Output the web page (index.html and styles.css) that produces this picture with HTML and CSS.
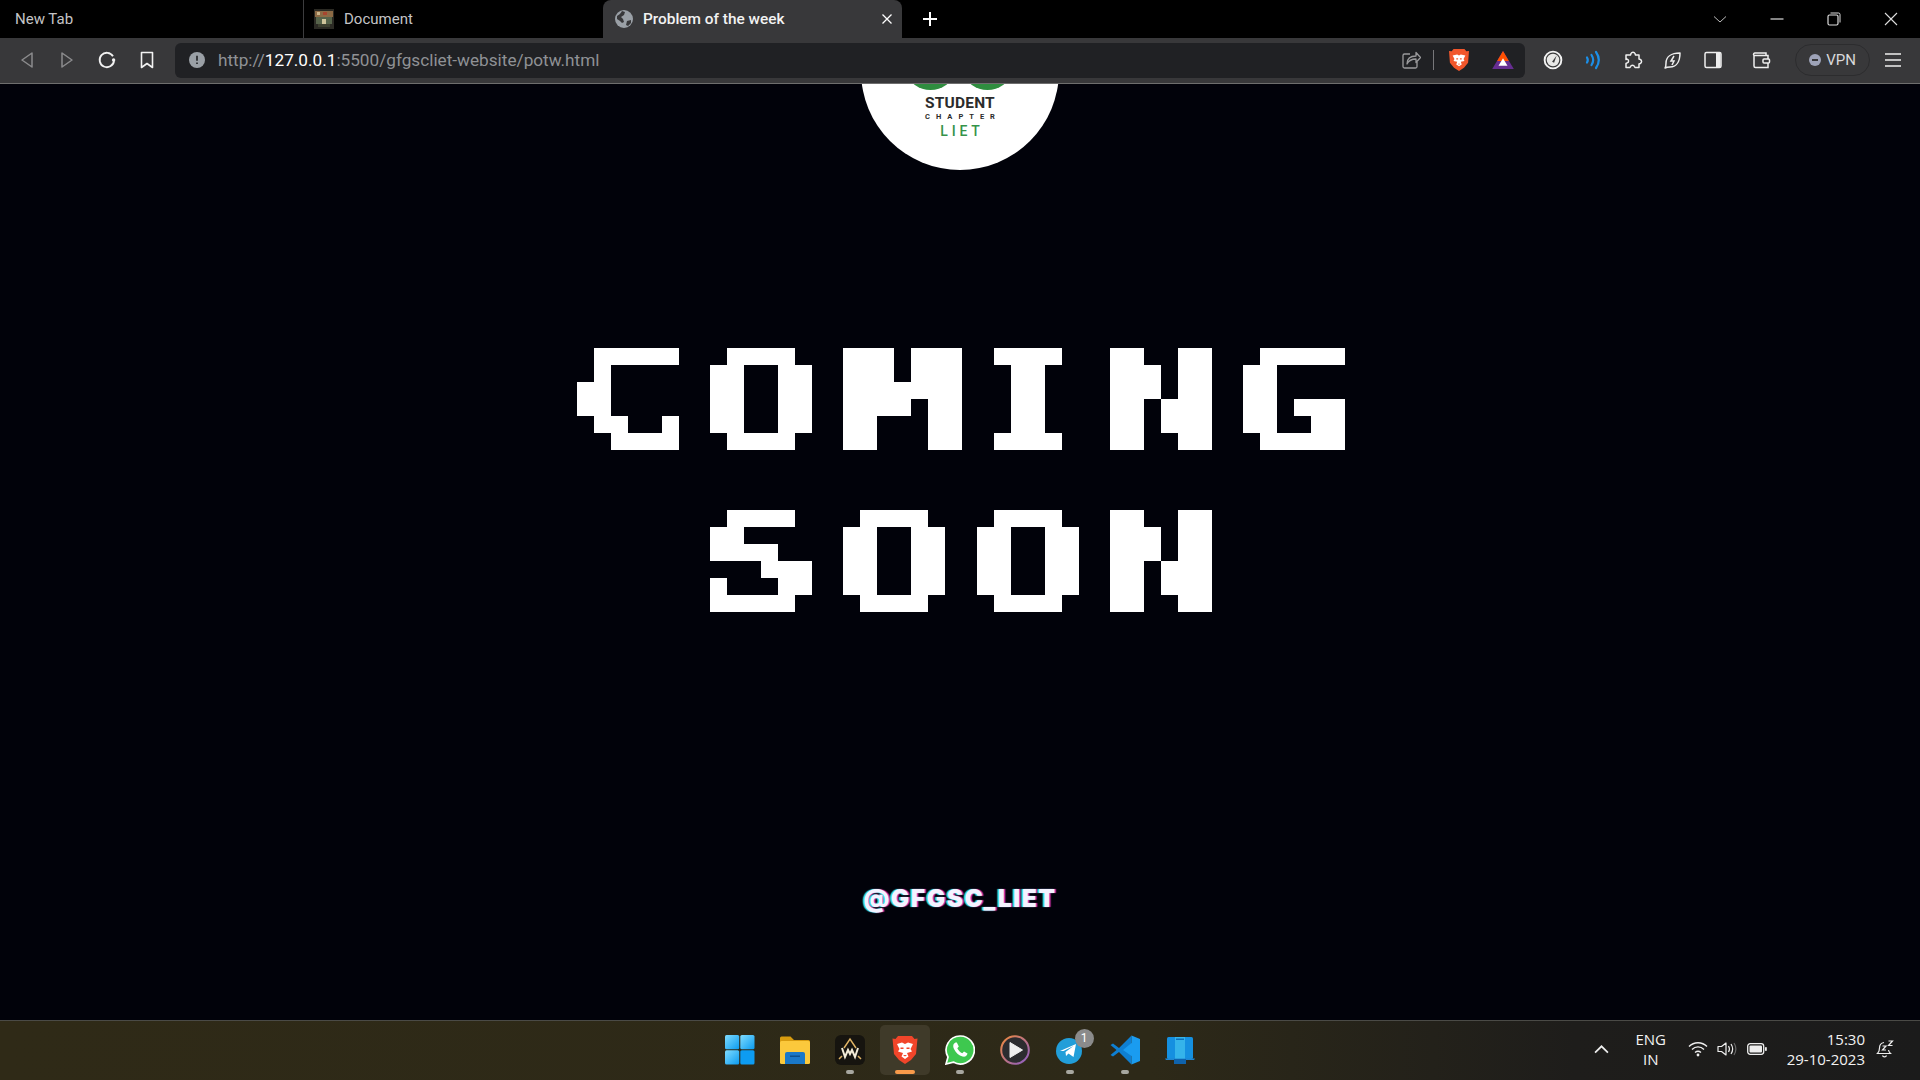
FILE: index.html
```html
<!DOCTYPE html>
<html lang="en">
<head>
<meta charset="utf-8">
<title>Problem of the week</title>
<link rel="stylesheet" href="styles.css">
</head>
<body>
<svg class="defs" width="0" height="0" aria-hidden="true">
  <defs>
    <filter id="pixelate" filterUnits="userSpaceOnUse" x="-40" y="-40" width="200" height="200" color-interpolation-filters="sRGB">
      <feFlood x="8" y="8" width="1" height="1" flood-color="#fff"/>
      <feComposite width="17" height="17"/>
      <feTile result="grid"/>
      <feComposite in="SourceGraphic" in2="grid" operator="in"/>
      <feComponentTransfer><feFuncA type="discrete" tableValues="0 1"/></feComponentTransfer>
      <feMorphology operator="dilate" radius="8"/>
    </filter>
    <linearGradient id="winG" x1="0" y1="0" x2="1" y2="1"><stop offset="0" stop-color="#7fdcff"/><stop offset="1" stop-color="#0b9bf0"/></linearGradient>
    <linearGradient id="ringG" x1="0" y1="0" x2="1" y2="1"><stop offset="0" stop-color="#f08a3c"/><stop offset="1" stop-color="#8a5cc8"/></linearGradient>
  </defs>
</svg>

<div class="tabstrip">
  <div class="tab tab-first"><span class="tab-title">New Tab</span></div>
  <div class="tab tab-doc">
    <svg class="favicon" viewBox="0 0 20 20"><rect width="20" height="20" fill="#2b2a24"/><rect x="1" y="2" width="18" height="6" fill="#8c6a45"/><rect x="3" y="3" width="3" height="3" fill="#c9b48a"/><rect x="9" y="3" width="4" height="3" fill="#a8452f"/><rect x="2" y="8" width="16" height="7" fill="#56634a"/><rect x="8" y="10" width="4" height="5" fill="#cfc49a"/><rect x="4" y="15" width="12" height="3" fill="#3d4030"/></svg>
    <span class="tab-title">Document</span>
  </div>
  <div class="tab tab-active">
    <svg class="favicon globe" viewBox="0 0 18 18"><circle cx="9" cy="9" r="9" fill="#9aa0a6"/><path d="M2 6c2-1 4-3 5-5l3 1-1 3-3 2 2 2 1 3-2 1-2-2-3-2zM12 11l4-1 0 3-3 3-2-1z" fill="#38383a"/></svg>
    <span class="tab-title active-title">Problem of the week</span>
    <svg class="tab-close" viewBox="0 0 10 10"><path d="M0.500 0.500l9 9M9.500 0.500l-9 9" stroke="#fff" stroke-width="1.300"/></svg>
  </div>
  <svg class="newtab" viewBox="0 0 16 16"><path d="M8 1v14M1 8h14" stroke="#fff" stroke-width="2"/></svg>
  <div class="spacer"></div>
  <div class="win-controls">
    <svg class="win-btn" viewBox="0 0 14 14"><path d="M1 4.500l6 5.500 6-5.500" fill="none" stroke="#bbb" stroke-width="1"/></svg>
    <svg class="win-btn" viewBox="0 0 14 14"><path d="M0.500 7h13" stroke="#ddd" stroke-width="1.200"/></svg>
    <svg class="win-btn" viewBox="0 0 14 14"><rect x="1" y="3" width="10" height="10" rx="1.500" fill="none" stroke="#ddd" stroke-width="1.200"/><path d="M3.500 1h8a1.500 1.500 0 0 1 1.500 1.500v8" fill="none" stroke="#ddd" stroke-width="1"/></svg>
    <svg class="win-btn" viewBox="0 0 14 14"><path d="M1 1l12 12M13 1L1 13" stroke="#ddd" stroke-width="1.100"/></svg>
  </div>
</div>

<div class="toolbar">
  <div class="tool"><svg class="ico" viewBox="0 0 20 20"><path d="M15 3L5 10l10 7z" fill="none" stroke="#8b8b8d" stroke-width="1.500" stroke-linejoin="round"/></svg></div>
  <div class="tool"><svg class="ico" viewBox="0 0 20 20"><path d="M5 3l10 7-10 7z" fill="none" stroke="#8b8b8d" stroke-width="1.500" stroke-linejoin="round"/></svg></div>
  <div class="tool"><svg class="ico" viewBox="0 0 20 20"><path d="M16 6.200A7.200 7.200 0 1 0 17 11" fill="none" stroke="#f2f2f2" stroke-width="1.800"/><circle cx="16.600" cy="10" r="1.700" fill="#f2f2f2"/></svg></div>
  <div class="tool"><svg class="ico" viewBox="0 0 20 20"><path d="M4.500 2.500h11v15L10 13.500l-5.500 4z" fill="none" stroke="#f2f2f2" stroke-width="1.600" stroke-linejoin="round"/></svg></div>
  <div class="address">
    <svg class="info" viewBox="0 0 16 16"><circle cx="8" cy="8" r="8" fill="#9aa0a6"/><path d="M8 3.800v5M8 10.500v1.600" stroke="#202124" stroke-width="1.600"/></svg>
    <div class="url">http://<b class="host">127.0.0.1</b>:5500/gfgscliet-website/potw.html</div>
    <svg class="share" viewBox="0 0 20 20"><path d="M9 4H3.500A1.500 1.500 0 0 0 2 5.500v11A1.500 1.500 0 0 0 3.500 18h11a1.500 1.500 0 0 0 1.500-1.500V12" fill="none" stroke="#9a9a9c" stroke-width="1.300"/><path d="M6 14c0-5 3-8 9-8V2.500l4.500 5-4.500 5V9c-4 0-7 1-9 5z" fill="none" stroke="#9a9a9c" stroke-width="1.300" stroke-linejoin="round"/></svg>
    <div class="addr-sep"></div>
    <svg class="brave" viewBox="0 0 22 26"><path d="M5 1h12l2 2.500 3-.5-1 13-4.500 5.500L11 25l-5.500-3.500L1 16 0 3l3 .5z" fill="#f1562b"/><path d="M4 8l5-1 2 1 2-1 5 1-2 4 1 2-4 1 1 3-3 2-3-2 1-3-4-1 1-2z" fill="#fff"/><path d="M8 11h2v1.500H8zM12 11h2v1.500h-2zM9.500 17h3l-1.500 1.200z" fill="#f1562b"/></svg>
    <svg class="bat" viewBox="0 0 24 20"><path d="M12 0l12 20H0z" fill="#662d91"/><path d="M12 0l6.500 11h-13z" fill="#ff5000"/><path d="M12 8l5 8.500H7z" fill="#fff"/></svg>
  </div>
  <div class="tool tool-after-addr"><svg class="ico" viewBox="0 0 22 22"><circle cx="11" cy="11" r="9.500" fill="#e8e8e6" stroke="#f5f5f5" stroke-width="1.500"/><circle cx="11" cy="11" r="7.500" fill="none" stroke="#3a3a3b" stroke-width="1.300"/><path d="M10 13l5-7-2.800 8z" fill="#3a3a3b"/></svg></div>
  <div class="tool"><svg class="ico" viewBox="0 0 20 20"><g fill="none" stroke="#1b8fe8" stroke-width="2.200" stroke-linecap="round"><path d="M4 7.500c1 1.600 1 3.400 0 5"/><path d="M8.500 5c2 3 2 7 0 10"/><path d="M13 2c3.500 5 3.500 11 0 16"/></g></svg></div>
  <div class="tool"><svg class="ico" viewBox="0 0 20 20"><path d="M8 3.500a2.200 2.200 0 0 1 4 0l.5 1.500H16v4l1.300.5a2.200 2.200 0 0 1 0 4L16 14v3.500h-4l-.5-1a2.200 2.200 0 0 0-4 0l-.5 1H3v-4l1.200-.6a2 2 0 0 0 0-3.800L3 9.500V5h4.500z" fill="none" stroke="#eee" stroke-width="1.500" stroke-linejoin="round"/></svg></div>
  <div class="tool"><svg class="ico" viewBox="0 0 20 20"><path d="M2 18c1-1 1-2 1-5 0-6 5-10 14-10 0 9-4 14-10 14-2 0-3 0-5 1z" fill="none" stroke="#eee" stroke-width="1.500" stroke-linejoin="round"/><path d="M11 6l-3 5h3l-2 4" fill="none" stroke="#eee" stroke-width="1.500"/></svg></div>
  <div class="tool"><svg class="ico" viewBox="0 0 20 20"><rect x="2" y="2.500" width="16" height="15" rx="1.500" fill="none" stroke="#eee" stroke-width="1.500"/><rect x="13" y="3" width="4.500" height="14" fill="#eee"/></svg></div>
  <div class="tool tool-wallet"><svg class="ico" viewBox="0 0 20 20"><path d="M3 5.500V16a1.500 1.500 0 0 0 1.500 1.500H17V13M17 9V5.500H3a1.500 1.500 0 0 1 1.500-2.500H15v2" fill="none" stroke="#eee" stroke-width="1.500"/><rect x="12" y="9" width="6.500" height="4" rx="1" fill="none" stroke="#eee" stroke-width="1.500"/></svg></div>
  <div class="vpn"><span class="vpn-dot"></span><span>VPN</span></div>
  <div class="tool"><svg class="ico" viewBox="0 0 20 20"><path d="M2 4h16M2 10h16M2 16h16" stroke="#eee" stroke-width="1.500"/></svg></div>
</div>

<main class="page">
  <div class="logo">
    <svg class="logo-leaves" viewBox="0 0 100 6"><ellipse cx="21.500" cy="-10" rx="21.500" ry="16" fill="#2f8d3f"/><ellipse cx="78.500" cy="-10" rx="21.500" ry="16" fill="#2f8d3f"/></svg>
    <div class="logo-student">STUDENT</div>
    <div class="logo-chapter">CHAPTER</div>
    <div class="logo-liet">LIET</div>
  </div>
  <div class="coming">
    <div class="pixel-line"><span class="px"><span class="glyph">C</span></span><span class="px"><span class="glyph">O</span></span><span class="px"><span class="glyph glyph-m">M</span></span><span class="px"><span class="glyph glyph-i">I</span></span><span class="px"><span class="glyph">N</span></span><span class="px"><span class="glyph">G</span></span></div>
    <div class="pixel-line"><span class="px"><span class="glyph">S</span></span><span class="px"><span class="glyph">O</span></span><span class="px"><span class="glyph">O</span></span><span class="px"><span class="glyph">N</span></span></div>
  </div>
  <div class="handle">@GFGSC_LIET</div>
</main>

<footer class="taskbar">
  <div></div>
  <div class="tb-icons">
    <div class="tb-item"><svg class="tb-ico" viewBox="0 0 30 30"><rect x="0" y="0" width="14.200" height="14.200" rx="1.500" fill="url(#winG)"/><rect x="15.300" y="0" width="14.200" height="14.200" rx="1.500" fill="url(#winG)"/><rect x="0" y="15.300" width="14.200" height="14.200" rx="1.500" fill="url(#winG)"/><rect x="15.300" y="15.300" width="14.200" height="14.200" rx="1.500" fill="#0d9cf2"/></svg></div>
    <div class="tb-item"><svg class="tb-ico" viewBox="0 0 30 30"><path d="M0 3a1.500 1.500 0 0 1 1.500-1.500h9L14 5h14.500A1.500 1.500 0 0 1 30 6.500V9H0z" fill="#d89c0f"/><rect x="0" y="6" width="30" height="23" rx="1.500" fill="#fbc93c"/><path d="M5 19a2 2 0 0 1 2-2h16a2 2 0 0 1 2 2v10H5z" fill="#1a78c8"/><rect x="10" y="20.500" width="10" height="1.500" fill="#0d4f8c"/></svg></div>
    <div class="tb-item has-dot"><svg class="tb-ico" viewBox="0 0 30 30"><rect width="30" height="30" rx="6" fill="#16140f"/><path d="M7 13l3 9 3-7 2 4 2-4 3 7 3-9" fill="none" stroke="#f3ecd8" stroke-width="2"/><path d="M9 13l6-9 6 9M4 24l3-3M26 24l-3-3" fill="none" stroke="#e0b465" stroke-width="1.500"/></svg></div>
    <div class="tb-item tb-active"><svg class="tb-ico" viewBox="0 0 26 30"><path d="M6 1h14l2.500 3 3-.5L24 19l-5 6-6 4-6-4-5-6L.5 3.500l3 .5z" fill="#f1452a"/><path d="M5 9l5-1.500 3 1.500 3-1.500L21 9l-2.500 5 1.500 2.500-5 1.500 1.500 3.500L13 24l-3.500-2.500L11 18l-5-1.500L7.500 14z" fill="#fff"/><path d="M8.500 12.500h3V14h-3zM14.500 12.500h3V14h-3zM11 20h4l-2 1.500z" fill="#f1452a"/></svg></div>
    <div class="tb-item has-dot"><svg class="tb-ico" viewBox="0 0 30 30"><path d="M15 1a14 14 0 0 0-12 21L1 29l7.300-1.900A14 14 0 1 0 15 1z" fill="#3ec84f" stroke="#fff" stroke-width="1.700"/><path d="M10.500 7.500c-2 1-3 3-1.500 6.500 2 4 5 6.500 8.500 7.500 3 .7 4.500-1 5-3l-3.500-2-1.700 1.800c-2-.8-4-2.800-5-5l1.500-1.800-2-4z" fill="#fff"/></svg></div>
    <div class="tb-item"><svg class="tb-ico" viewBox="0 0 30 30"><circle cx="15" cy="15" r="13.800" fill="#2c2c30" stroke="url(#ringG)" stroke-width="2"/><path d="M10 7.500L22.500 15 10 22.500z" fill="#efefef" stroke="#efefef" stroke-linejoin="round"/></svg></div>
    <div class="tb-item has-dot"><svg class="tb-ico" viewBox="0 0 30 30"><circle cx="14" cy="16" r="13" fill="#229ed9"/><path d="M5 16l16-7-2.500 13-5-3.500-2.500 2.500-.5-4 8-6-10 5z" fill="#fff"/></svg><span class="badge">1</span></div>
    <div class="tb-item has-dot"><svg class="tb-ico" viewBox="0 0 30 30"><path d="M21.500 .5L9 13 3 8.500 .5 10 6.500 15 .5 20 3 21.500 9 17l12.500 12.500z" fill="#0e7fd2"/><path d="M21.500 .5L30 4v22l-8.500 3.500L21.500 21 13 15l8.500-7z" fill="#1a9cf0"/></svg></div>
    <div class="tb-item"><svg class="tb-ico" viewBox="0 0 30 30"><rect x="2" y="2" width="26" height="22" rx="1.500" fill="#1590e0"/><path d="M10 2h10v22H10z" fill="#35b4ea"/><rect x="11" y="3.500" width="8" height="1.500" fill="#0d6fb8"/><path d="M0 23.500h30l-1 1.500H1z" fill="#1f86d0"/><rect x="9" y="24" width="12" height="5" fill="#0f63ad"/></svg></div>
  </div>
  <div class="tray">
    <svg class="tray-chev" viewBox="0 0 14 8"><path d="M1 7l6-6 6 6" fill="none" stroke="#eee" stroke-width="1.600"/></svg>
    <div class="lang"><div>ENG</div><div>IN</div></div>
    <svg class="tray-wifi" viewBox="0 0 20 16"><g fill="none" stroke="#eee" stroke-width="1.400"><path d="M1 5.500c5-5 13-5 18 0"/><path d="M4 8.500c3.500-3.500 8.500-3.500 12 0"/><path d="M7 11.500c2-1.600 4-1.600 6 0"/></g><circle cx="10" cy="14" r="1.400" fill="#eee"/></svg>
    <svg class="tray-vol" viewBox="0 0 20 16"><path d="M1 5.500h3.500L9 2v12l-4.500-3.500H1z" fill="none" stroke="#eee" stroke-width="1.200" stroke-linejoin="round"/><path d="M11.500 5c1.300 2 1.300 4 0 6M14 3c2 3 2 7 0 10" fill="none" stroke="#eee" stroke-width="1.200"/><path d="M17 2c2.500 4 2.500 8 0 12" fill="none" stroke="#666" stroke-width="1.200"/></svg>
    <svg class="tray-bat" viewBox="0 0 20 12"><rect x=".7" y=".7" width="16" height="10.600" rx="2.500" fill="none" stroke="#eee" stroke-width="1.300"/><rect x="2.500" y="2.500" width="12.500" height="7" rx="1" fill="#eee"/><rect x="18" y="4" width="1.800" height="4" rx=".8" fill="#eee"/></svg>
    <div class="clock"><div>15:30</div><div>29-10-2023</div></div>
    <svg class="tray-note" viewBox="0 0 20 20"><path d="M9 3.500C6 4 4.500 6 4.500 9c0 2.500-.5 4-2 5.500h13c-1-1-1.700-2-2-3.500" fill="none" stroke="#eee" stroke-width="1.200"/><path d="M7.500 16.500c.5 1.700 3.500 1.700 4 0" fill="none" stroke="#eee" stroke-width="1.200"/><path d="M7.500 7h3.500l-3.500 4H11M13.500 2h4l-4 4.500h4" fill="none" stroke="#eee" stroke-width="1.200"/></svg>
  </div>
</footer>
</body>
</html>
```
FILE: styles.css
```css
* { box-sizing: border-box; }
html, body { margin: 0; height: 100%; }
body {
  width: 1920px;
  height: 1080px;
  overflow: hidden;
  display: flex;
  flex-direction: column;
  background: #01020a;
  font-family: "Open Sans", "Noto Sans", sans-serif;
  color: #fff;
}
.defs { position: absolute; }

/* tab strip */
.tabstrip { height: 38px; flex: none; display: flex; align-items: stretch; background: #000; }
.tab { display: flex; align-items: center; font-size: 15px; color: #c4c4c6; font-family: Roboto, sans-serif; }
.tab-first { width: 304px; padding-left: 15px; border-right: 1px solid #3c3c3e; }
.tab-doc { width: 299px; padding-left: 10px; gap: 10px; }
.tab-active { width: 299px; padding-left: 12px; padding-right: 10px; gap: 10px; background: #38383a; border-radius: 8px 8px 0 0; color: #f2f2f2; }
.favicon { width: 20px; height: 20px; flex: none; }
.globe { width: 18px; height: 18px; }
.active-title { flex: 1; font-weight: 500; font-size: 15.400px; }
.tab-close { width: 10px; height: 10px; }
.newtab { width: 16px; height: 16px; align-self: center; margin-left: 20px; }
.spacer { flex: 1; }
.win-controls { display: flex; align-items: center; gap: 43px; padding-right: 22px; }
.win-btn { width: 14px; height: 14px; }

/* toolbar */
.toolbar { height: 46px; flex: none; display: flex; align-items: center; padding: 0 0 1px 7px; background: #38383a; border-bottom: 1px solid #6e6e6e; }
.tool { width: 40px; flex: none; display: flex; justify-content: center; align-items: center; }
.ico { width: 20px; height: 20px; }
.address { width: 1350px; height: 35px; flex: none; margin-left: 8px; display: flex; align-items: center; padding-left: 14px; background: #202124; border-radius: 6px; }
.info { width: 16px; height: 16px; flex: none; }
.url { flex: 1; margin-left: 13px; font: 17.200px Roboto, sans-serif; color: #8f9195; }
.host { font-weight: 400; color: #fff; }
.share { width: 20px; height: 20px; margin-right: 12px; }
.addr-sep { width: 1px; height: 20px; background: #77777a; margin-right: 15px; }
.brave { width: 20px; height: 24px; margin-right: 23px; }
.bat { width: 22px; height: 18px; margin-right: 11px; }
.tool-after-addr { margin-left: 8px; }
.tool-wallet { margin-left: 8px; }
.vpn { width: 75px; height: 32px; margin-left: 14px; margin-right: 3px; flex: none; display: flex; align-items: center; justify-content: center; gap: 5px; border: 1px solid #2c2c2e; border-radius: 16px; font: 15px Roboto, sans-serif; color: #d9d9db; }
.vpn-dot { width: 12px; height: 12px; border-radius: 50%; background: #9ea3b8; position: relative; }
.vpn-dot::after { content: ""; position: absolute; left: 3px; top: 5px; width: 6px; height: 2px; background: #38383a; }

/* page */
.page { flex: 1; min-height: 0; overflow: hidden; display: flex; flex-direction: column; align-items: center; }
.logo { width: 198px; height: 198px; flex: none; margin-top: -112px; padding-top: 112px; background: #fff; border-radius: 50%; display: flex; flex-direction: column; align-items: center; color: #2b2b2b; font-family: Roboto, sans-serif; position: relative; }
.logo-leaves { position: absolute; left: 48px; top: 112px; width: 100px; height: 6px; }
.logo-student { margin-top: 12px; font-size: 15.500px; font-weight: 700; line-height: 14px; letter-spacing: .2px; }
.logo-chapter { margin-top: 3px; font-size: 7.500px; font-weight: 700; line-height: 8px; letter-spacing: 6px; margin-right: -6px; }
.logo-liet { margin-top: 3px; font-size: 14px; font-weight: 500; line-height: 15px; letter-spacing: 3.800px; color: #35934a; margin-right: -4px; }
.coming { margin-top: 178px; display: flex; flex-direction: column; align-items: center; gap: 60px; }
.pixel-line { display: flex; gap: 33.330px; height: 102px; }
.px { display: block; width: 100px; height: 102px; filter: url(#pixelate); }
.glyph { display: block; width: 82px; padding-top: 1px; font: 700 136px/102px "DejaVu Sans Mono", monospace; text-align: center; transform: translateX(-11.500px) scaleX(1.500); transform-origin: 0 0; color: #fff; }
.glyph-m { transform: translateX(-14px) scaleX(1.780); -webkit-text-stroke: 2px #fff; }
.glyph-i { transform: translateX(9px); -webkit-text-stroke: 4px #fff; }
.handle { margin-top: 272px; font: 900 24.500px/28px Inter, sans-serif; letter-spacing: 1.500px; color: #f4f2ff; text-shadow: -1.500px 0 1px #35e6ea, 1.500px 0 1px #e035b5; }

/* taskbar */
.taskbar { height: 60px; flex: none; display: grid; grid-template-columns: 1fr auto 1fr; background: linear-gradient(90deg, #2f2a17 0%, #2d2918 60%, #1e1d1b 82%, #1b1b1b 100%); border-top: 1px solid #4a4a46; }
.tb-icons { display: flex; align-items: flex-start; padding-top: 4px; }
.tb-item { width: 55px; height: 50px; display: flex; align-items: center; justify-content: center; position: relative; border-radius: 5px; }
.tb-ico { width: 30px; height: 30px; }
.tb-active { background: #3f3a29; width: 50px; margin: 0 2.500px; }
.tb-active::after { content: ""; position: absolute; left: 15px; bottom: 1px; width: 20px; height: 4px; border-radius: 2px; background: #f89a4a; }
.has-dot::after { content: ""; position: absolute; left: 23px; bottom: 1px; width: 8px; height: 4px; border-radius: 2px; background: #a7a7a0; }
.badge { position: absolute; left: 32px; top: 4px; width: 19px; height: 19px; border-radius: 50%; background: #8b8b8b; font: 12px/19px Roboto, sans-serif; text-align: center; color: #fff; }
.tray { display: flex; align-items: center; justify-content: flex-end; font: 15px/20px "Open Sans", sans-serif; color: #f2f2f2; padding: 0 25px 3px 0; }
.tray-chev { width: 15px; height: 9px; margin-right: 22px; }
.lang { text-align: center; width: 40px; margin-right: 17px; }
.tray-wifi { width: 20px; height: 16px; margin-right: 9px; }
.tray-vol { width: 20px; height: 16px; margin-right: 10px; }
.tray-bat { width: 20px; height: 12px; margin-right: 20px; }
.clock { text-align: right; margin-right: 10px; }
.tray-note { width: 20px; height: 20px; }
```
